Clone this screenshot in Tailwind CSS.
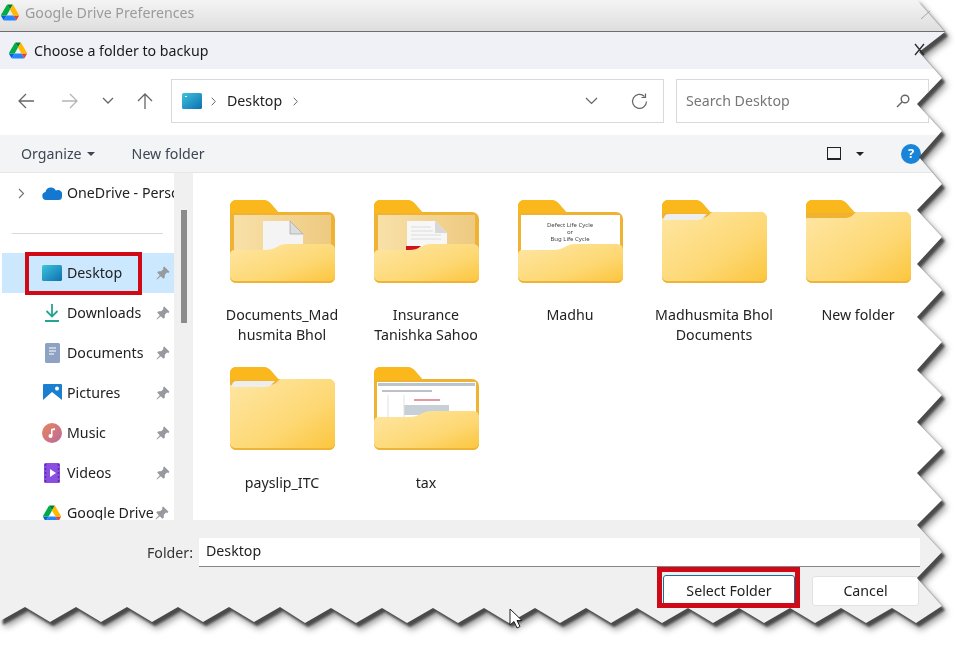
<!DOCTYPE html>
<html lang="en">
<head>
<meta charset="UTF-8">
<title>Choose a folder to backup</title>
<script src="https://cdn.jsdelivr.net/npm/@tailwindcss/browser@4"></script>
</head>
<body class="bg-white font-['Noto_Sans',sans-serif] text-[14.2px] text-[#222]">

<!-- shared icons and gradients -->
<svg class="absolute w-0 h-0" aria-hidden="true">
  <defs>
    <linearGradient id="frontGrad" x1="0" y1="0" x2="1" y2="1"><stop offset="0" stop-color="#fee6a4"/><stop offset=".6" stop-color="#fdd874"/><stop offset="1" stop-color="#fcc53c"/></linearGradient>
    <linearGradient id="panelGrad" x1="0" y1="0" x2="1" y2="0"><stop offset="0" stop-color="#f8e0a8"/><stop offset="1" stop-color="#edca80"/></linearGradient>
    <linearGradient id="deskGrad" x1="0" y1="0" x2="1" y2="1"><stop offset="0" stop-color="#3cc4dc"/><stop offset="1" stop-color="#0f6fb0"/></linearGradient>
    <linearGradient id="musicGrad" x1="0" y1="0" x2="1" y2="1"><stop offset="0" stop-color="#e8875c"/><stop offset="1" stop-color="#b96a9c"/></linearGradient>
    <symbol id="drive" viewBox="0 0 87.3 78">
      <path d="m6.6 66.85 3.85 6.65c.8 1.4 1.95 2.5 3.3 3.3l13.75-23.8h-27.5c0 1.55.4 3.1 1.2 4.5z" fill="#0066da"/>
      <path d="m43.65 25-13.75-23.8c-1.35.8-2.5 1.9-3.3 3.3l-25.4 44a9.06 9.06 0 0 0 -1.2 4.5h27.5z" fill="#00ac47"/>
      <path d="m73.55 76.8c1.35-.8 2.5-1.9 3.3-3.3l1.6-2.75 7.65-13.25c.8-1.4 1.2-2.95 1.2-4.5h-27.502l5.852 11.5z" fill="#ea4335"/>
      <path d="m43.65 25 13.75-23.8c-1.35-.8-2.9-1.2-4.5-1.2h-18.5c-1.6 0-3.15.45-4.5 1.2z" fill="#00832d"/>
      <path d="m59.8 53h-32.3l-13.75 23.8c1.35.8 2.9 1.2 4.5 1.2h50.8c1.6 0 3.15-.45 4.5-1.2z" fill="#2684fc"/>
      <path d="m73.4 26.5-12.7-22c-.8-1.4-1.95-2.5-3.3-3.3l-13.75 23.8 16.15 28h27.45c0-1.55-.4-3.1-1.2-4.5z" fill="#ffba00"/>
    </symbol>
    <symbol id="pin" viewBox="0 0 14 14">
      <path d="M8.2 0.5 13.5 5.800 12.400 6.900 11 6.600 8.800 8.800 8.800 11.400 7.400 12.800 4.800 10.200 1 13.500 0.500 13 3.800 9.200 1.200 6.600 2.600 5.200 5.200 5.200 7.400 3 7.100 1.600Z" fill="#96999d"/>
    </symbol>
    <symbol id="folderBack" viewBox="0 0 105 83">
      <path d="M0 6a6 6 0 0 1 6-6h26c4 0 7 1 10 5l6 7h50a7 7 0 0 1 7 7v58a6 6 0 0 1-6 6H6a6 6 0 0 1-6-6Z" fill="#f0b232"/>
      <path d="M0 6a6 6 0 0 1 6-6h26c4 0 7 1 10 5l7 8H0Z" fill="#fbb81c"/>
    </symbol>
    <symbol id="folderFront" viewBox="0 0 105 83">
      <path d="M0 55q0-5 5-5h30c5 0 8-1 12-3 3-2 6-3 10-3h42q6 0 6 6v27a6 6 0 0 1-6 6H6a6 6 0 0 1-6-6Z" fill="url(#frontGrad)"/>
      <path d="M0 77a6 6 0 0 0 6 6h93a6 6 0 0 0 6-6v-1a5 5 0 0 1-5 5H5a5 5 0 0 1-5-5Z" fill="#efb437"/>
    </symbol>
    <symbol id="folderClosed" viewBox="0 0 105 83">
      <path d="M0 19q0-1 1-1h37c5 0 7-1 10-4l2-2h49a6 6 0 0 1 6 6v59a6 6 0 0 1-6 6H6a6 6 0 0 1-6-6Z" fill="url(#frontGrad)"/>
      <path d="M0 77a6 6 0 0 0 6 6h93a6 6 0 0 0 6-6v-1a5 5 0 0 1-5 5H5a5 5 0 0 1-5-5Z" fill="#efb437"/>
    </symbol>
  </defs>
</svg>

<div class="relative w-[957px] h-[647px] overflow-hidden bg-white">
  <!-- torn page edge: the shadow comes from the wrapper, the shape from the clip -->
  <div class="h-full [filter:drop-shadow(3px_4px_1px_#4a4a4a)_drop-shadow(2px_3px_3px_#9a9a9a)]">
    <div class="h-full flex flex-col [clip-path:polygon(0_0,917px_0,945px_32px,919px_52px,942px_78px,917px_104px,942px_131px,919px_157px,942px_184px,917px_210px,942px_237px,917px_264px,942px_290px,917px_317px,942px_342px,917px_370px,942px_395px,917px_422px,942px_448px,917px_473px,942px_500px,917px_525px,942px_552px,917px_578px,942px_606px,916px_623px,892px_608px,866px_623px,841px_608px,815px_623px,790px_608px,764px_623px,739px_608px,713px_623px,688px_608px,662px_623px,637px_608px,611px_623px,586px_608px,560px_623px,535px_608px,509px_623px,484px_608px,458px_623px,433px_608px,407px_623px,382px_608px,356px_623px,331px_608px,305px_623px,280px_607px,254px_622px,229px_607px,203px_622px,178px_607px,152px_622px,127px_607px,101px_622px,76px_607px,50px_622px,25px_607px,0_621px)]">

      <!-- window behind the dialog -->
      <div class="h-[32px] shrink-0 flex items-center gap-[6px] pl-[1px] pb-[6px] bg-gradient-to-b from-[#f4f4f4] to-[#dedede] border-b border-[#6e6e6e] text-[#9b9b9b]">
        <svg class="w-[18px] h-[17px] shrink-0"><use href="#drive"/></svg>
        <span>Google Drive Preferences</span>
      </div>

      <!-- dialog title -->
      <div class="h-[37px] shrink-0 flex items-center gap-[7px] pl-[9px] bg-[#eff1f7] text-[#1a1a1a]">
        <svg class="w-[18px] h-[17px] shrink-0"><use href="#drive"/></svg>
        <span>Choose a folder to backup</span>
      </div>

      <!-- navigation row -->
      <div class="h-[66px] shrink-0 flex items-center bg-white pl-[17px] pb-[2px]">
        <svg class="w-[18px] h-[18px] shrink-0 text-[#666]" viewBox="0 0 18 18" fill="none" stroke="currentColor" stroke-width="1.3"><path d="M17 9H2M9 2 2 9l7 7"/></svg>
        <svg class="w-[18px] h-[18px] shrink-0 ml-[26px] text-[#b5b5b5]" viewBox="0 0 18 18" fill="none" stroke="currentColor" stroke-width="1.3"><path d="M1 9h15M9 2l7 7-7 7"/></svg>
        <svg class="w-[12px] h-[8px] shrink-0 ml-[23px] text-[#666]" viewBox="0 0 12 8" fill="none" stroke="currentColor" stroke-width="1.3"><path d="M1 1l5 5 5-5"/></svg>
        <svg class="w-[18px] h-[18px] shrink-0 ml-[22px] text-[#666]" viewBox="0 0 18 18" fill="none" stroke="currentColor" stroke-width="1.3"><path d="M9 17V2M2 9l7-7 7 7"/></svg>
        <div class="ml-[17px] w-[493px] h-[44px] shrink-0 border border-[#d9d9d9] flex items-center pl-[10px]">
          <svg class="w-[20px] h-[16px] shrink-0"><rect width="20" height="16" rx="1.5" fill="url(#deskGrad)"/><rect x="3" y="3" width="2" height="1" fill="#fff"/></svg>
          <svg class="w-[5px] h-[9px] shrink-0 ml-[9px] text-[#666]" viewBox="0 0 5 9" fill="none" stroke="currentColor"><path d="M.7.7l3.6 3.8L.7 8.3"/></svg>
          <span class="ml-[11px]">Desktop</span>
          <svg class="w-[5px] h-[9px] shrink-0 ml-[11px] text-[#666]" viewBox="0 0 5 9" fill="none" stroke="currentColor"><path d="M.7.7l3.6 3.8L.7 8.3"/></svg>
          <svg class="w-[13px] h-[8px] shrink-0 ml-auto text-[#666]" viewBox="0 0 13 8" fill="none" stroke="currentColor" stroke-width="1.2"><path d="M1 1l5.500 5.500L12 1"/></svg>
          <svg class="w-[17px] h-[17px] shrink-0 ml-[33px] mr-[15px] text-[#666]" viewBox="0 0 17 17" fill="none" stroke="currentColor" stroke-width="1.2"><path d="M13.500 3.500A7 7 0 1 0 15.500 8.500"/><path d="M14.500.5v4h-4"/></svg>
        </div>
        <div class="ml-[12px] w-[253px] h-[44px] shrink-0 border border-[#d9d9d9] flex items-center pl-[9px] text-[#777]">
          <span>Search Desktop</span>
          <svg class="w-[14px] h-[14px] shrink-0 ml-auto mr-[18px] text-[#666]" viewBox="0 0 14 14" fill="none" stroke="currentColor" stroke-width="1.400"><circle cx="9" cy="5" r="3.800"/><path d="M6 8 1 13"/></svg>
        </div>
      </div>

      <!-- command bar -->
      <div class="h-[38px] shrink-0 flex items-center bg-[#f3f4f6] border-b border-[#e6e6e6] pl-[21px] pr-[36px] text-[#3d4654]">
        <span>Organize</span>
        <span class="ml-[5px] border-x-[4px] border-x-transparent border-t-[4px] border-t-[#3d4654]"></span>
        <span class="ml-[37px]">New folder</span>
        <span class="ml-auto w-[14px] h-[13px] border border-[#222] border-b-2"></span>
        <span class="ml-[15px] border-x-[4px] border-x-transparent border-t-[4px] border-t-[#222]"></span>
        <span class="ml-[37px] w-[20px] h-[20px] rounded-full bg-[#1a84d8] text-white text-[13px] font-bold flex items-center justify-center">?</span>
      </div>

      <!-- main area -->
      <div class="h-[347px] shrink-0 flex bg-white">
        <aside class="w-[174px] shrink-0 overflow-hidden">
          <div class="h-10 flex items-center">
            <svg class="w-[7px] h-[11px] shrink-0 ml-[18px] text-[#777]" viewBox="0 0 7 11" fill="none" stroke="currentColor" stroke-width="1.200"><path d="M1 1l4.500 4.500L1 10"/></svg>
            <svg class="w-[20px] h-[13px] shrink-0 ml-[17px]" viewBox="0 0 20 13"><path d="M4 13a4 4 0 0 1-.5-7.900A5.500 5.500 0 0 1 13.800 3.500 4.600 4.600 0 0 1 20 9.500 3.500 3.500 0 0 1 16.500 13Z" fill="#1478d0"/></svg>
            <span class="ml-[5px] whitespace-nowrap">OneDrive - Personal</span>
          </div>
          <div class="h-10 flex items-center pl-[12px] pr-[11px]"><div class="h-px w-full bg-[#d9d9d9]"></div></div>

          <div class="relative h-10 ml-[2px] flex items-center bg-[#cce8ff]">
            <svg class="w-[20px] h-[16px] shrink-0 ml-[40px]"><rect width="20" height="16" rx="1.500" fill="url(#deskGrad)"/></svg>
            <span class="ml-[5px]">Desktop</span>
            <svg class="w-[14px] h-[14px] shrink-0 ml-auto mr-[4px]"><use href="#pin"/></svg>
            <div class="absolute left-[23px] top-[-1px] w-[117px] h-[43px] border-[4px] border-[#cf0a16]"></div>
          </div>

          <div class="h-10 flex items-center">
            <svg class="w-[16px] h-[18px] shrink-0 ml-[44px]" viewBox="0 0 16 18" fill="none" stroke="#25a591" stroke-width="1.800"><path d="M8 0v12M2.500 7 8 12.500 13.500 7M1 17h14"/></svg>
            <span class="ml-[7px]">Downloads</span>
            <svg class="w-[14px] h-[14px] shrink-0 ml-auto mr-[4px]"><use href="#pin"/></svg>
          </div>
          <div class="h-10 flex items-center">
            <svg class="w-[15px] h-[20px] shrink-0 ml-[45px]" viewBox="0 0 15 20"><rect width="15" height="20" rx="1.500" fill="#8ea3c4"/><path d="M4 5h7M4 8h7M4 11h5" stroke="#fff" stroke-width="1.200"/></svg>
            <span class="ml-[7px]">Documents</span>
            <svg class="w-[14px] h-[14px] shrink-0 ml-auto mr-[4px]"><use href="#pin"/></svg>
          </div>
          <div class="h-10 flex items-center">
            <svg class="w-[19px] h-[18px] shrink-0 ml-[43px]" viewBox="0 0 19 18"><rect width="19" height="18" rx="1" fill="#1a7fd0"/><path d="M0 16 9 8l10 8v2H0Z" fill="#fff"/><circle cx="14" cy="4.500" r="2" fill="#fff"/></svg>
            <span class="ml-[5px]">Pictures</span>
            <svg class="w-[14px] h-[14px] shrink-0 ml-auto mr-[4px]"><use href="#pin"/></svg>
          </div>
          <div class="h-10 flex items-center">
            <svg class="w-[20px] h-[20px] shrink-0 ml-[42px]" viewBox="0 0 20 20"><circle cx="10" cy="10" r="10" fill="url(#musicGrad)"/><path d="M9 13V6l4-1v2l-2.500.6V13" fill="#fff"/><circle cx="8.500" cy="13" r="2" fill="#fff"/></svg>
            <span class="ml-[5px]">Music</span>
            <svg class="w-[14px] h-[14px] shrink-0 ml-auto mr-[4px]"><use href="#pin"/></svg>
          </div>
          <div class="h-10 flex items-center">
            <svg class="w-[16px] h-[20px] shrink-0 ml-[44px]" viewBox="0 0 16 20"><rect width="16" height="20" rx="1.500" fill="#8a4fe0"/><path d="M6 6v8l6-4Z" fill="#fff"/><path d="M1.500 1v18M14.500 1v18" stroke="#5a2aa8" stroke-width="1.500" stroke-dasharray="2 2"/></svg>
            <span class="ml-[7px]">Videos</span>
            <svg class="w-[14px] h-[14px] shrink-0 ml-auto mr-[4px]"><use href="#pin"/></svg>
          </div>
          <div class="relative h-10 flex items-center">
            <svg class="w-[18px] h-[17px] ml-[43px] shrink-0"><use href="#drive"/></svg>
            <span class="ml-[6px] w-[87px] overflow-hidden whitespace-nowrap">Google Drive</span>
            <svg class="w-[14px] h-[14px] ml-[1px] shrink-0"><use href="#pin"/></svg>
          </div>
        </aside>

        <!-- scrollbar -->
        <div class="w-[19px] shrink-0 bg-[#f0f0f0] pl-[7px] pt-[37px]">
          <div class="w-[6px] h-[113px] bg-[#8b8b8b]"></div>
        </div>

        <!-- folder grid -->
        <div class="grid grid-cols-[repeat(5,144px)] auto-rows-[167px] pl-[17px] pt-[27px] text-center">
          <div class="flex flex-col items-center">
            <svg class="w-[105px] h-[83px]" viewBox="0 0 105 83">
              <use href="#folderBack"/><rect x="4" y="15" width="97" height="40" fill="url(#panelGrad)"/>
              <path d="M33 21h27l13 13v16H33Z" fill="#f4f4f4"/><path d="M60 21v13h13Z" fill="#dcdcdc" stroke="#999" stroke-width=".6"/>
              <use href="#folderFront"/>
            </svg>
            <p class="mt-[22px] leading-5">Documents_Mad<br>husmita Bhol</p>
          </div>
          <div class="flex flex-col items-center">
            <svg class="w-[105px] h-[83px]" viewBox="0 0 105 83">
              <use href="#folderBack"/><rect x="4" y="15" width="97" height="40" fill="url(#panelGrad)"/>
              <path d="M33 21h28l12 12v17H33Z" fill="#f7f7f7"/><path d="M61 21v12h12Z" fill="#d8d8d8"/>
              <path d="M37 27h20M37 31h22M37 35h30M37 39h30" stroke="#dcdcdc"/>
              <path d="M32 46h15l-6 5h-9Z" fill="#d0121b"/>
              <use href="#folderFront"/>
            </svg>
            <p class="mt-[22px] leading-5">Insurance<br>Tanishka Sahoo</p>
          </div>
          <div class="flex flex-col items-center">
            <svg class="w-[105px] h-[83px]" viewBox="0 0 105 83">
              <use href="#folderBack"/><rect x="3" y="15" width="99" height="40" fill="#fff"/>
              <text x="52" y="27" text-anchor="middle" font-size="6" fill="#444">Defect Life Cycle</text>
              <text x="52" y="34" text-anchor="middle" font-size="6" fill="#444">or</text>
              <text x="52" y="41" text-anchor="middle" font-size="6" fill="#444">Bug Life Cycle</text>
              <use href="#folderFront"/>
            </svg>
            <p class="mt-[22px] leading-5">Madhu</p>
          </div>
          <div class="flex flex-col items-center">
            <svg class="w-[105px] h-[83px]" viewBox="0 0 105 83">
              <use href="#folderBack"/><use href="#folderClosed"/>
              <path d="M2 19q0-5 5-5h38l-4 4q-2 2-6 2H2Z" fill="#eeeeee"/>
            </svg>
            <p class="mt-[22px] leading-5">Madhusmita Bhol<br>Documents</p>
          </div>
          <div class="flex flex-col items-center">
            <svg class="w-[105px] h-[83px]" viewBox="0 0 105 83">
              <use href="#folderBack"/><use href="#folderClosed"/>
            </svg>
            <p class="mt-[22px] leading-5">New folder</p>
          </div>
          <div class="flex flex-col items-center">
            <svg class="w-[105px] h-[83px]" viewBox="0 0 105 83">
              <use href="#folderBack"/><use href="#folderClosed"/>
              <path d="M2 19q0-5 5-5h38l-4 4q-2 2-6 2H2Z" fill="#eeeeee"/>
            </svg>
            <p class="mt-[23px] leading-5">payslip_ITC</p>
          </div>
          <div class="flex flex-col items-center">
            <svg class="w-[105px] h-[83px]" viewBox="0 0 105 83">
              <use href="#folderBack"/><rect x="3" y="15" width="99" height="40" fill="#fff"/>
              <rect x="4" y="16" width="97" height="3" fill="#b9c4cc"/>
              <path d="M8 24h50" stroke="#aab" stroke-width="1.500"/>
              <path d="M40 33h26" stroke="#c8303f"/><path d="M30 38h45v10H30Z" fill="#c7d0d6"/>
              <path d="M14 28v24M30 28v24" stroke="#e2e2e2"/>
              <use href="#folderFront"/>
            </svg>
            <p class="mt-[23px] leading-5">tax</p>
          </div>
        </div>
      </div>

      <!-- footer -->
      <div class="grow bg-[#f0f0f0] pl-[147px]">
        <div class="flex items-center mt-[18px] h-[29px]">
          <span class="w-[46px] text-[#333]">Folder:</span>
          <div class="ml-[6px] w-[721px] h-[29px] bg-white border-b border-[#858585] pl-[7px] pb-[2px] flex items-center">Desktop</div>
        </div>
        <div class="flex mt-[8px] pl-[516px]">
          <div class="relative w-[132px] h-[31px] rounded-[3px] bg-white border border-[#1a6f9f] flex items-center justify-center">
            Select Folder
            <div class="absolute left-[-7px] top-[-9px] w-[143px] h-[41px] border-[5px] border-[#cf0a16]"></div>
          </div>
          <div class="ml-[17px] mt-px w-[107px] h-[30px] rounded-[3px] bg-white border border-[#e2e2e2] flex items-center justify-center">Cancel</div>
        </div>
      </div>
    </div>
  </div>

  <!-- things lying over the torn edge -->
  <svg class="absolute left-[914px] top-[43px] w-[12px] h-[13px] text-[#2a2a2a]" viewBox="0 0 12 13" fill="none" stroke="currentColor" stroke-width="1.300"><path d="M1 1l9 11M10 1 1 12"/></svg>
  <svg class="absolute left-[921px] top-[11px] w-[9px] h-[8px] text-[#a5a5a5]" viewBox="0 0 9 8" fill="none" stroke="currentColor"><path d="M0 8 9 0"/></svg>
  <svg class="absolute left-[509px] top-[608px] w-[13px] h-[21px]" viewBox="0 0 13 21"><path d="M1 1v16l4-3.500 3 6.500 3-1.500-3-6h5Z" fill="#fff" stroke="#222"/></svg>
</div>
</body>
</html>
